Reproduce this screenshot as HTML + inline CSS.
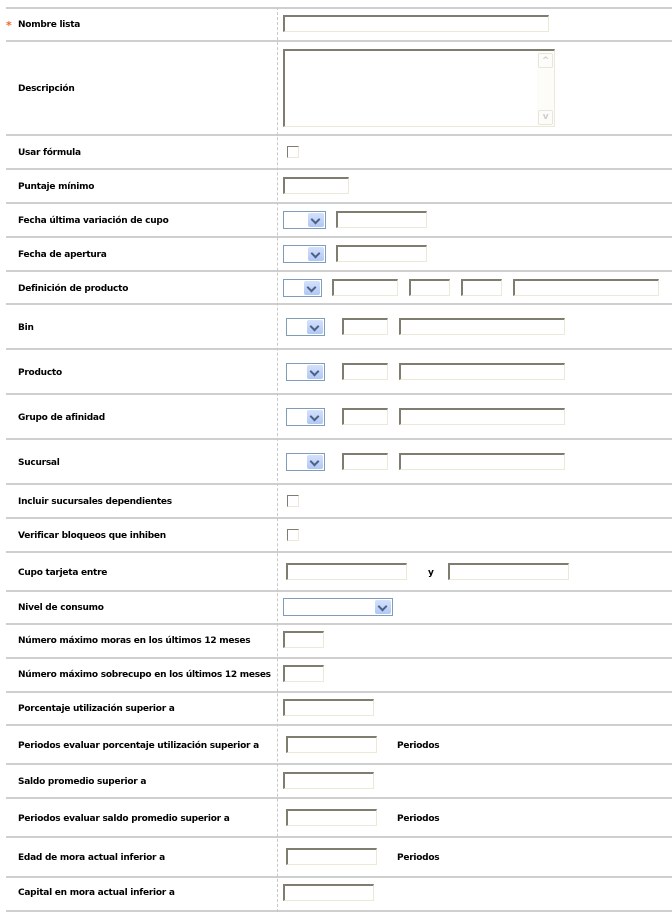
<!DOCTYPE html>
<html><head><meta charset="utf-8"><style>
*{margin:0;padding:0;box-sizing:border-box}
body{width:672px;height:916px;background:#fff;position:relative;overflow:hidden;font-family:"DejaVu Sans","Liberation Sans",sans-serif;font-weight:bold;font-size:9px;letter-spacing:-0.25px;color:#000}
.h{position:absolute;left:6px;right:0;height:2px;background:#cfcfcf}
.v{position:absolute;left:277px;top:7px;height:905px;border-left:1px dashed #c8c8c8}
.l{position:absolute;left:18px;white-space:nowrap;margin-top:1px}
.i{position:absolute;background:#fff;border:1px solid #ece9d8;border-top:2px solid #7f7d6f;border-left:2px solid #7f7d6f}
.s{position:absolute;background:#fff;border:1px solid #7f9db9}
.s b{position:absolute;right:1px;top:1px;width:16px;bottom:1px;background:linear-gradient(#d4e1fc,#b0c8f5);border-radius:2px}
.s b:after{content:"";position:absolute;left:4px;top:3px;width:5px;height:5px;border-right:2px solid #4d6185;border-bottom:2px solid #4d6185;transform:rotate(45deg)}
.c{position:absolute;width:12px;height:12px;border:1px solid #ece9d8;border-top:1px solid #7f7d6f;border-left:1px solid #7f7d6f;background:#fff}
.t{position:absolute;white-space:nowrap;margin-top:1px}
</style></head><body>
<div class="h" style="top:7px"></div><div class="h" style="top:40px"></div><div class="h" style="top:134px"></div><div class="h" style="top:168px"></div><div class="h" style="top:202px"></div><div class="h" style="top:236px"></div><div class="h" style="top:270px"></div><div class="h" style="top:303px"></div><div class="h" style="top:348px"></div><div class="h" style="top:393px"></div><div class="h" style="top:438px"></div><div class="h" style="top:483px"></div><div class="h" style="top:517px"></div><div class="h" style="top:551px"></div><div class="h" style="top:590px"></div><div class="h" style="top:623px"></div><div class="h" style="top:657px"></div><div class="h" style="top:691px"></div><div class="h" style="top:724px"></div><div class="h" style="top:763px"></div><div class="h" style="top:797px"></div><div class="h" style="top:836px"></div><div class="h" style="top:876px"></div><div class="h" style="top:910px"></div>
<div class="v"></div>
<span class="t" style="left:6px;top:18px;color:#f26522;font-size:11px">*</span>
<div class="l" style="top:19px">Nombre lista</div>
<div class="l" style="top:83px">Descripción</div>
<div class="l" style="top:147px">Usar fórmula</div>
<div class="l" style="top:181px">Puntaje mínimo</div>
<div class="l" style="top:215px">Fecha última variación de cupo</div>
<div class="l" style="top:249px">Fecha de apertura</div>
<div class="l" style="top:283px">Definición de producto</div>
<div class="l" style="top:322px">Bin</div>
<div class="l" style="top:367px">Producto</div>
<div class="l" style="top:412px">Grupo de afinidad</div>
<div class="l" style="top:457px">Sucursal</div>
<div class="l" style="top:496px">Incluir sucursales dependientes</div>
<div class="l" style="top:530px">Verificar bloqueos que inhiben</div>
<div class="l" style="top:567px">Cupo tarjeta entre</div>
<div class="l" style="top:602px">Nivel de consumo</div>
<div class="l" style="top:635px">Número máximo moras en los últimos 12 meses</div>
<div class="l" style="top:669px">Número máximo sobrecupo en los últimos 12 meses</div>
<div class="l" style="top:703px">Porcentaje utilización superior a</div>
<div class="l" style="top:740px">Periodos evaluar porcentaje utilización superior a</div>
<div class="l" style="top:776px">Saldo promedio superior a</div>
<div class="l" style="top:813px">Periodos evaluar saldo promedio superior a</div>
<div class="l" style="top:852px">Edad de mora actual inferior a</div>
<div class="l" style="top:887px">Capital en mora actual inferior a</div>

<div class="i" style="left:283px;top:15px;width:266px;height:17px"></div>
<div class="i" style="left:283px;top:49px;width:272px;height:78px"><div style="position:absolute;right:0;top:0;width:17px;bottom:0;background:#fcfcf8"><div style="position:absolute;left:1px;top:2px;width:15px;height:15px;border:1px solid #e6e6df;border-radius:2px;color:#ccc;font-size:9px;text-align:center;line-height:14px">^</div><div style="position:absolute;left:1px;bottom:1px;width:15px;height:15px;border:1px solid #e6e6df;border-radius:2px;color:#ccc;font-size:9px;text-align:center;line-height:12px">v</div></div></div>
<div class="c" style="left:287px;top:146px"></div>
<div class="i" style="left:283px;top:177px;width:66px;height:17px"></div>

<div class="s" style="left:283px;top:211px;width:43px;height:18px"><b></b></div><div class="i" style="left:336px;top:211px;width:91px;height:17px"></div>
<div class="s" style="left:283px;top:245px;width:43px;height:18px"><b></b></div><div class="i" style="left:336px;top:245px;width:91px;height:17px"></div>
<div class="s" style="left:283px;top:279px;width:39px;height:18px"><b></b></div>
<div class="i" style="left:332px;top:279px;width:66px;height:17px"></div><div class="i" style="left:409px;top:279px;width:41px;height:17px"></div><div class="i" style="left:461px;top:279px;width:41px;height:17px"></div><div class="i" style="left:513px;top:279px;width:146px;height:17px"></div>

<div class="s" style="left:286px;top:318px;width:39px;height:18px"><b></b></div><div class="i" style="left:342px;top:318px;width:46px;height:17px"></div><div class="i" style="left:399px;top:318px;width:166px;height:17px"></div>
<div class="s" style="left:286px;top:363px;width:39px;height:18px"><b></b></div><div class="i" style="left:342px;top:363px;width:46px;height:17px"></div><div class="i" style="left:399px;top:363px;width:166px;height:17px"></div>
<div class="s" style="left:286px;top:408px;width:39px;height:18px"><b></b></div><div class="i" style="left:342px;top:408px;width:46px;height:17px"></div><div class="i" style="left:399px;top:408px;width:166px;height:17px"></div>
<div class="s" style="left:286px;top:453px;width:39px;height:18px"><b></b></div><div class="i" style="left:342px;top:453px;width:46px;height:17px"></div><div class="i" style="left:399px;top:453px;width:166px;height:17px"></div>

<div class="c" style="left:287px;top:495px"></div>
<div class="c" style="left:287px;top:529px"></div>
<div class="i" style="left:286px;top:563px;width:121px;height:17px"></div><span class="t" style="left:428px;top:567px">y</span><div class="i" style="left:448px;top:563px;width:121px;height:17px"></div>
<div class="s" style="left:283px;top:598px;width:110px;height:18px"><b></b></div>
<div class="i" style="left:283px;top:631px;width:41px;height:17px"></div>
<div class="i" style="left:283px;top:665px;width:41px;height:17px"></div>
<div class="i" style="left:283px;top:699px;width:91px;height:17px"></div>
<div class="i" style="left:286px;top:736px;width:91px;height:17px"></div><span class="t" style="left:397px;top:740px">Periodos</span>
<div class="i" style="left:283px;top:772px;width:91px;height:17px"></div>
<div class="i" style="left:286px;top:809px;width:91px;height:17px"></div><span class="t" style="left:397px;top:813px">Periodos</span>
<div class="i" style="left:286px;top:848px;width:91px;height:17px"></div><span class="t" style="left:397px;top:852px">Periodos</span>
<div class="i" style="left:283px;top:884px;width:91px;height:17px"></div>
</body></html>
